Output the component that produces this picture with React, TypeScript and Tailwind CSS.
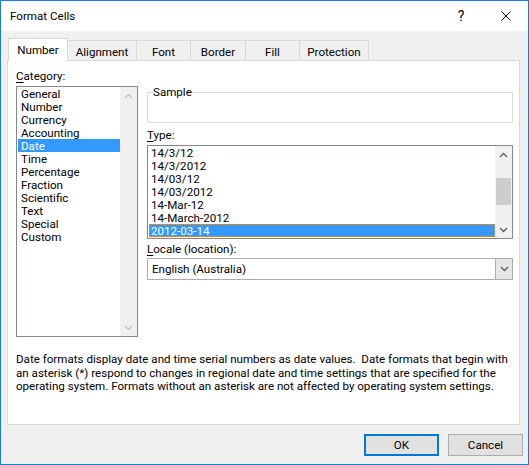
import React from 'react';

const categories = ['General', 'Number', 'Currency', 'Accounting', 'Date', 'Time', 'Percentage', 'Fraction', 'Scientific', 'Text', 'Special', 'Custom'];
const types = ['14/3/12', '14/3/2012', '14/03/12', '14/03/2012', '14-Mar-12', '14-March-2012', '2012-03-14'];

const tabs = [
  { label: 'Alignment', w: 'w-[69px]' },
  { label: 'Font', w: 'w-[54px]' },
  { label: 'Border', w: 'w-[55px]' },
  { label: 'Fill', w: 'w-[54px]' },
  { label: 'Protection', w: 'w-[69px]' },
];

const Chevron = ({ up, color }: { up?: boolean; color: string }) => (
  <svg width="9" height="6" viewBox="0 0 9 6">
    <path d={up ? 'M1 5L4.5 1.5L8 5' : 'M1 1L4.5 4.5L8 1'} fill="none" stroke={color} strokeWidth="1.4" />
  </svg>
);

export default function App() {
  return (
    <div className="w-[529px] h-[465px] border border-[#1a7ed6] bg-[#f0f0f0] flex flex-col text-[11.6px] leading-[13px] text-black [font-family:Roboto,'Liberation_Sans',Arial,sans-serif]">
      {/* Title bar */}
      <div className="h-[30px] shrink-0 bg-white flex items-center pl-[9px] pr-[17px]">
        <span>Format Cells</span>
        <span className="ml-auto w-[14px] text-center text-[14px]">?</span>
        <svg className="ml-[33px]" width="10" height="10" viewBox="0 0 10 10">
          <path d="M0.5 0.5L9.5 9.5M9.5 0.5L0.5 9.5" stroke="#000" strokeWidth="1" />
        </svg>
      </div>

      <div className="flex-1 flex flex-col pt-[7px] pl-[6px] pr-[5px]">
        {/* Tabs */}
        <div className="h-[22px] flex items-end pl-[1px]">
          <div className="relative z-10 -mb-[1px] w-[60px] h-[23px] bg-white border border-b-0 border-[#d9d9d9] flex items-center justify-center pt-[1px]">
            Number
          </div>
          {tabs.map(t => (
            <div key={t.label} className={`${t.w} h-[20px] border-t border-r border-[#d9d9d9] flex items-center justify-center pt-[3px]`}>
              {t.label}
            </div>
          ))}
        </div>

        {/* Panel */}
        <div className="w-[513px] h-[365px] bg-white border border-[#d9d9d9] pl-[8px] pt-[9px] flex flex-col">
          <div className="flex gap-[9px]">
            {/* Category */}
            <div className="w-[122px] flex flex-col">
              <div className="h-[13px]"><span className="underline underline-offset-[2px]">C</span>ategory:</div>
              <div className="mt-[3px] h-[251px] border border-[#828790] flex">
                <div className="flex-1 flex flex-col">
                  {categories.map(c => (
                    <div key={c} className={`ml-[1px] h-[13px] pl-[3px] leading-[14px] ${c === 'Date' ? 'bg-[#3399ff] text-white' : ''}`}>{c}</div>
                  ))}
                </div>
                <div className="w-[17px] bg-[#f0f0f0] flex flex-col justify-between">
                  <div className="h-[17px] flex items-center justify-center"><Chevron up color="#c4c4c4" /></div>
                  <div className="h-[17px] flex items-center justify-center"><Chevron color="#c4c4c4" /></div>
                </div>
              </div>
            </div>

            {/* Right side */}
            <div className="w-[366px] flex flex-col">
              <fieldset className="mt-[16px] border border-[#dcdcdc] pl-[5px]">
                <legend className="px-0 leading-[13px]">Sample</legend>
                <div className="h-[23px]" />
              </fieldset>

              <div className="mt-[6px] h-[13px]"><span className="underline underline-offset-[2px]">T</span>ype:</div>
              <div className="mt-[3px] h-[94px] border border-[#828790] flex">
                <div className="flex-1 flex flex-col">
                  {types.map(t => (
                    <div
                      key={t}
                      className={`ml-[1px] h-[13px] pl-[2px] leading-[14px] ${t === '2012-03-14' ? 'bg-[#3399ff] text-white outline outline-1 outline-dotted outline-[#e8963a] -outline-offset-1' : ''}`}
                    >
                      {t}
                    </div>
                  ))}
                </div>
                <div className="w-[17px] bg-[#f0f0f0] flex flex-col">
                  <div className="h-[17px] flex items-center justify-center"><Chevron up color="#606060" /></div>
                  <div className="flex-1 flex flex-col px-[1px] pt-[15px]">
                    <div className="h-[27px] bg-[#cdcdcd]" />
                  </div>
                  <div className="h-[17px] flex items-center justify-center"><Chevron color="#606060" /></div>
                </div>
              </div>

              <div className="mt-[4px] h-[13px]"><span className="underline underline-offset-[2px]">L</span>ocale (location):</div>
              <div className="mt-[2px] h-[22px] border border-[#acacac] flex">
                <div className="flex-1 flex items-center pl-[4px] pt-[1px]">English (Australia)</div>
                <div className="w-[17px] bg-[#e5e5e5] border-l border-[#acacac] flex items-center justify-center">
                  <Chevron color="#606060" />
                </div>
              </div>
            </div>
          </div>

          <p className="mt-[16px] leading-[13.5px] whitespace-nowrap">
            Date formats display date and time serial numbers as date values.&nbsp; Date formats that begin with<br />
            an asterisk (*) respond to changes in regional date and time settings that are specified for the<br />
            operating system. Formats without an asterisk are not affected by operating system settings.
          </p>
        </div>

        {/* Buttons */}
        <div className="mt-[9px] flex justify-end gap-[9px]">
          <button className="w-[75px] h-[22px] bg-[#e1e1e1] border-2 border-[#0078d7]">OK</button>
          <button className="w-[75px] h-[22px] bg-[#e1e1e1] border border-[#adadad]">Cancel</button>
        </div>
      </div>
    </div>
  );
}
